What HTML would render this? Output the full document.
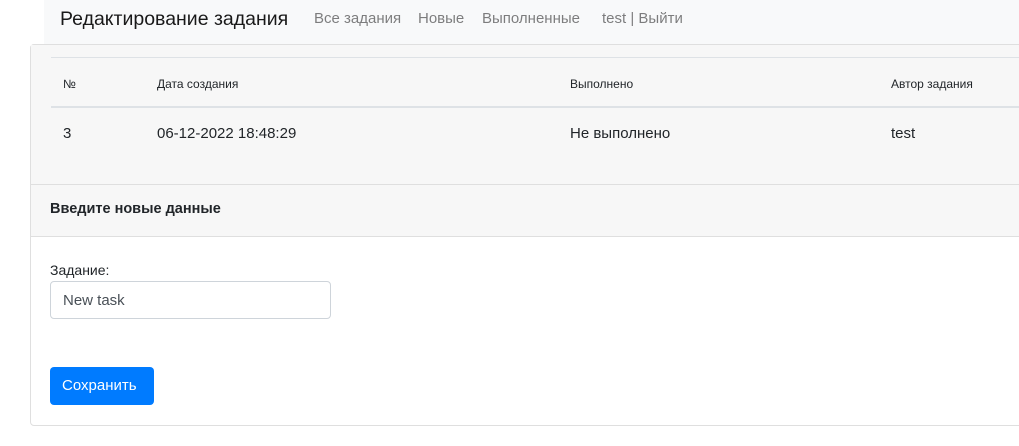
<!DOCTYPE html>
<html><head><meta charset="utf-8"><style>
*{box-sizing:border-box;margin:0;padding:0}
body{width:1019px;height:446px;background:#fff;font-family:"Liberation Sans",sans-serif;color:#212529;position:relative;overflow:hidden}
.nav{position:absolute;left:44px;top:0;right:0;height:44px;background:#f8f9fa}
.brand{position:absolute;left:16px;top:8px;font-size:19.5px;color:rgba(0,0,0,.9)}
.links{position:absolute;left:270px;top:10px;font-size:15px;color:rgba(0,0,0,.5);white-space:nowrap}
.links span{position:absolute;top:0}
.card{position:absolute;left:30px;top:44px;width:1000px;height:382px;border:1px solid #dfdfdf;border-radius:4px}
.tbl{position:absolute;left:0;top:0;width:100%;height:140px;background:#f7f7f7}
.l1{position:absolute;left:20px;right:0;top:12px;border-top:1px solid #dee2e6}
.l2{position:absolute;left:20px;right:0;top:61px;border-top:2px solid #dee2e6}
.t{position:absolute;white-space:nowrap}
.hdr{position:absolute;left:0;top:139px;width:100%;height:53px;background:#f7f7f7;border-top:1px solid #dfdfdf;border-bottom:1px solid #dfdfdf}
.inp{position:absolute;left:19px;top:236px;width:281px;height:38px;border:1px solid #ced4da;border-radius:4px;font-size:15px;padding:10px 12px;color:#495057}
.btn{position:absolute;left:19px;top:322px;width:104px;height:38px;background:#007bff;border-radius:4px;color:#fff;font-size:15px;padding:10px 12px}
</style></head><body>
<div class="nav"><div class="brand">Редактирование задания</div>
<div class="links"><span style="left:0">Все задания</span><span style="left:104px">Новые</span><span style="left:168px">Выполненные</span><span style="left:288px">test | Выйти</span></div></div>
<div class="card">
<div class="tbl"><div class="l1"></div><div class="l2"></div>
<div class="t" style="left:32px;top:32px;font-size:12px">№</div>
<div class="t" style="left:126px;top:32px;font-size:12px">Дата создания</div>
<div class="t" style="left:539px;top:32px;font-size:12px">Выполнено</div>
<div class="t" style="left:860px;top:32px;font-size:12px">Автор задания</div>
<div class="t" style="left:32px;top:80px;font-size:15px">3</div>
<div class="t" style="left:126px;top:80px;font-size:15px">06-12-2022 18:48:29</div>
<div class="t" style="left:539px;top:80px;font-size:15px">Не выполнено</div>
<div class="t" style="left:860px;top:80px;font-size:15px">test</div>
</div>
<div class="hdr"><div class="t" style="left:19px;top:16px;font-size:14.5px;font-weight:bold">Введите новые данные</div></div>
<div class="t" style="left:19px;top:217px;font-size:14px">Задание:</div>
<div class="inp">New task</div>
<div class="btn">Сохранить</div>
</div>
</body></html>
